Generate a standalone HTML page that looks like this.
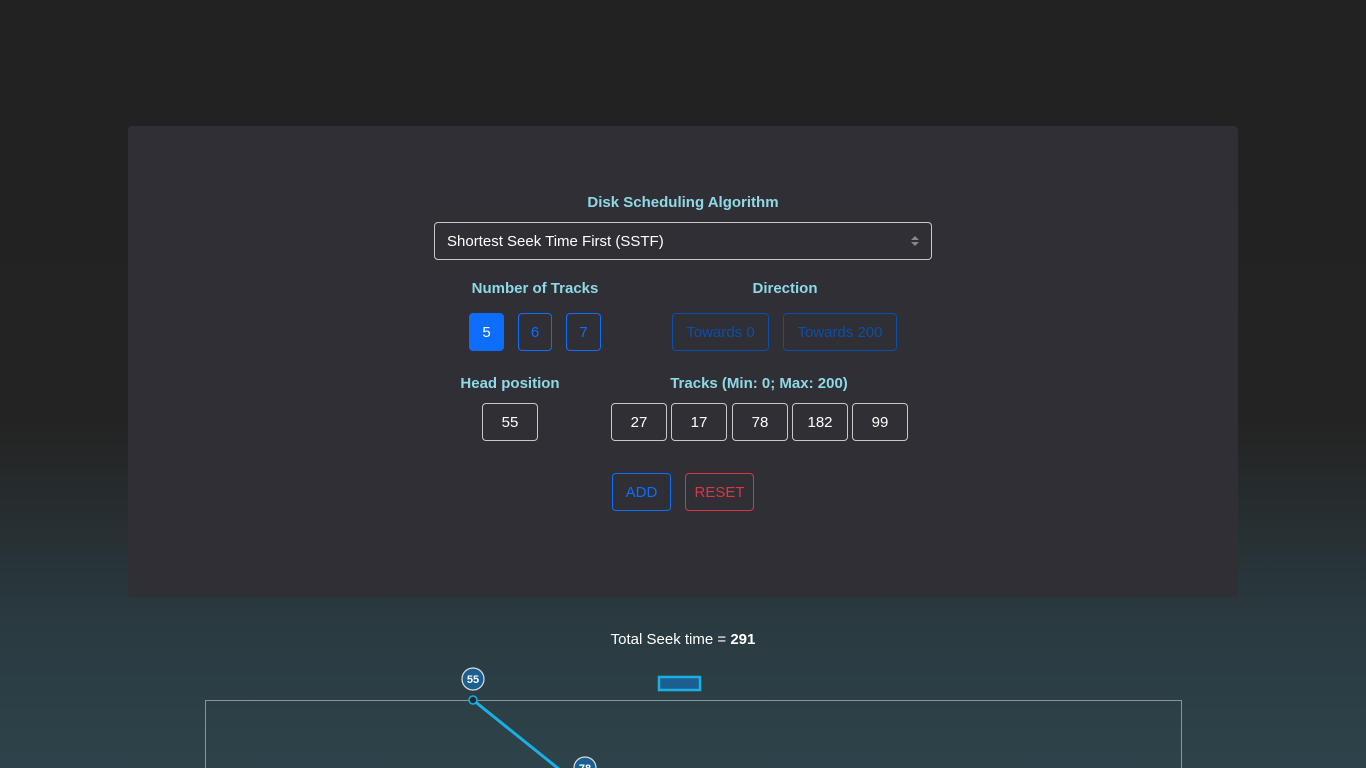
<!DOCTYPE html>
<html><head><meta charset="utf-8"><style>
*{box-sizing:border-box;margin:0;padding:0}
body{width:1366px;height:768px;overflow:hidden;font-family:"Liberation Sans",sans-serif;background:linear-gradient(#222222 0px,#232323 420px,#2a3a40 620px,#2d434a 768px);position:relative;color:#fff}
.card{position:absolute;left:128px;top:126px;width:1110px;height:471px;background:#302f35;border-radius:4px}
.a{position:absolute}
.lbl{position:absolute;color:#8fd9e6;font-weight:bold;font-size:15px;text-align:center;white-space:nowrap}
.box{position:absolute;border:1px solid #c8c8c8;border-radius:4px;color:#fff;font-size:15px;display:flex;align-items:center;justify-content:center}
.btn{position:absolute;border:1px solid #0d6efd;border-radius:4px;color:#0d6efd;font-size:15px;display:flex;align-items:center;justify-content:center}
.dir{border-color:#0b4fa8;color:#0b4fa8}
</style></head><body>
<div class="card"></div>
<div class="lbl" style="left:434px;width:498px;top:194px">Disk Scheduling Algorithm</div>
<div class="box" style="left:434px;top:222px;width:498px;height:38px;justify-content:flex-start;padding-left:12px">Shortest Seek Time First (SSTF)</div>
<div class="a" style="left:911px;top:236px;width:0;height:0;border-left:4px solid transparent;border-right:4px solid transparent;border-bottom:4px solid #888"></div>
<div class="a" style="left:911px;top:242px;width:0;height:0;border-left:4px solid transparent;border-right:4px solid transparent;border-top:4px solid #888"></div>
<div class="lbl" style="left:440px;width:190px;top:280px">Number of Tracks</div>
<div class="lbl" style="left:690px;width:190px;top:280px">Direction</div>
<div class="btn" style="left:469px;top:313px;width:35px;height:38px;background:#0d6efd;color:#fff">5</div>
<div class="btn" style="left:518px;top:313px;width:34px;height:38px">6</div>
<div class="btn" style="left:566px;top:313px;width:35px;height:38px">7</div>
<div class="btn dir" style="left:672px;top:313px;width:97px;height:38px">Towards 0</div>
<div class="btn dir" style="left:783px;top:313px;width:114px;height:38px">Towards 200</div>
<div class="lbl" style="left:440px;width:140px;top:375px">Head position</div>
<div class="lbl" style="left:610px;width:298px;top:375px">Tracks (Min: 0; Max: 200)</div>
<div class="box" style="left:482px;top:403px;width:56px;height:38px">55</div>
<div class="box" style="left:611px;top:403px;width:56px;height:38px">27</div>
<div class="box" style="left:671px;top:403px;width:56px;height:38px">17</div>
<div class="box" style="left:732px;top:403px;width:56px;height:38px">78</div>
<div class="box" style="left:792px;top:403px;width:56px;height:38px">182</div>
<div class="box" style="left:852px;top:403px;width:56px;height:38px">99</div>
<div class="btn" style="left:612px;top:473px;width:59px;height:38px">ADD</div>
<div class="btn" style="left:685px;top:473px;width:69px;height:38px;border-color:#dc3545;color:#dc3545">RESET</div>
<div class="a" style="left:0;width:1366px;top:631px;text-align:center;font-size:15px">Total Seek time = <b>291</b></div>
<svg class="a" style="left:0;top:0" width="1366" height="768">
<rect x="659" y="677" width="41" height="13" fill="#1a5f8f" stroke="#1ab0e6" stroke-width="2.5"/>
<rect x="205.5" y="700.5" width="976" height="80" fill="none" stroke="#8a9598" stroke-width="1"/>
<line x1="473" y1="700" x2="585" y2="790" stroke="#1ab0e6" stroke-width="3"/>
<circle cx="473" cy="700" r="4" fill="#1d2a30" stroke="#1ab0e6" stroke-width="1.5"/>
<circle cx="473" cy="679" r="11" fill="#1a5f8f" stroke="#ddd" stroke-width="1.2"/>
<text x="473" y="683" font-size="11" font-weight="bold" fill="#fff" text-anchor="middle" font-family="Liberation Sans">55</text>
<circle cx="585" cy="768" r="11" fill="#1a5f8f" stroke="#ddd" stroke-width="1.2"/>
<text x="585" y="772" font-size="11" font-weight="bold" fill="#fff" text-anchor="middle" font-family="Liberation Sans">78</text>
</svg>
</body></html>
